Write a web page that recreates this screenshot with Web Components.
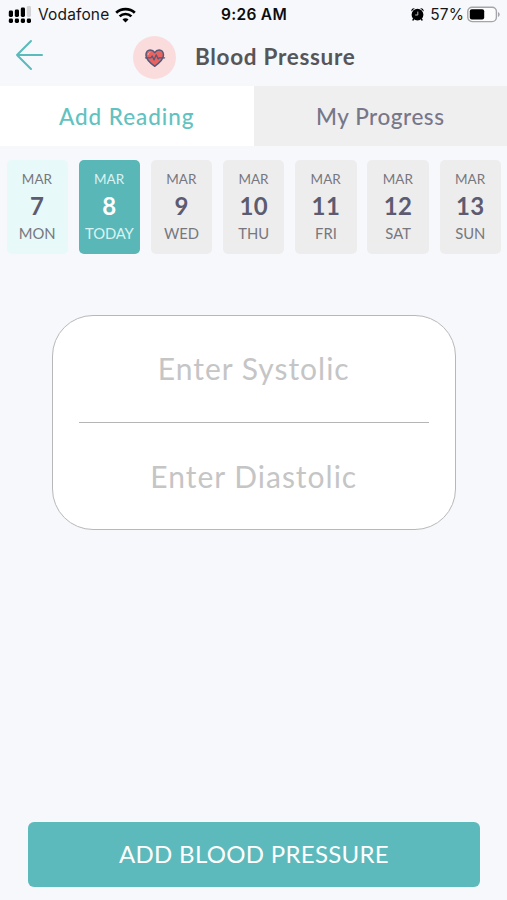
<!DOCTYPE html>
<html lang="en">
<head>
<meta charset="utf-8">
<title>Blood Pressure</title>
<style>
html,body{margin:0;height:100%;background:#f6f8fc;font-family:Lato,"Open Sans",sans-serif;overflow:hidden}
</style>
</head>
<body>
<bp-screen></bp-screen>
<script>
const define = (name, html) => customElements.define(name, class extends HTMLElement {
  constructor() {
    super();
    this.attachShadow({ mode: 'open' }).innerHTML = html;
  }
});

define('status-bar', `
<style>
:host{display:grid;grid-template-columns:1fr auto 1fr;align-items:center;height:29px;padding:0 7px 0 8px;box-sizing:border-box;font-family:Inter,sans-serif;font-size:15.5px;line-height:28px;color:#161618;white-space:nowrap}
.l,.r{display:flex;align-items:center}
.r{justify-content:flex-end}
.car{margin:0 6px 0 6px;letter-spacing:.15px}
.t{font-weight:600;color:#0c0c0e;letter-spacing:.3px}
.p{margin:0 3px 0 6px;letter-spacing:.1px}
svg{display:block;flex:none}
.r svg{margin-top:-1px}
</style>
<div class="l">
<svg width="24" height="18" viewBox="0 0 24 18">
<g fill="#000"><rect x=".8" y="4.500" width="4.200" height="6.500" rx="1.4"/><rect x="6.8" y="3.500" width="4.200" height="7.500" rx="1.4"/><rect x="12.8" y="1.500" width="4.200" height="9.500" rx="1.4"/><rect x=".8" y="12.500" width="4.200" height="4.500" rx="1.4"/><rect x="6.8" y="12.500" width="4.200" height="4.500" rx="1.4"/><rect x="12.8" y="12.500" width="4.200" height="4.500" rx="1.4"/><rect x="18.8" y="12.500" width="4.200" height="4.500" rx="1.4"/></g><rect x="18.8" y="0" width="4.200" height="11" rx="1.4" fill="#d3d3d6"/></svg>
<span class="car">Vodafone</span>
<svg width="21" height="16" viewBox="0 0 21 16" fill="none" stroke="#000" stroke-width="2.7"><path d="M1.2 5.8C6.3.9 14.7.9 19.8 5.8"/><path d="M4.6 9.4c3.3-3.2 8.5-3.2 11.8 0"/><path d="M10.5 15.5l-3-3.1c1.6-1.6 4.4-1.6 6 0z" fill="#000" stroke="none"/></svg>
</div>
<span class="t">9:26 AM</span>
<div class="r">
<svg width="13" height="15" viewBox="0 0 13 15"><circle cx="6.500" cy="7.700" r="5.900"/><path d="M.3 4.600C0 2 1.800.9 3.800 1.200zM12.700 4.600c.3-2.600-1.500-3.700-3.500-3.400z"/><path d="M2.800 11.500L1.800 13.500M10.200 11.500l1 2" stroke="#000" stroke-width="1.600"/><path d="M6.800 4.600v3.400H4.200" fill="none" stroke="#b9babe" stroke-width="1"/></svg>
<span class="p">57%</span>
<svg width="33" height="17" viewBox="0 0 33 17"><rect x=".8" y="1.2" width="28.6" height="14.4" rx="4.3" fill="#fcfcfd" stroke="#a5a5a8" stroke-width="1.4"/><rect x="2.8" y="3.300" width="14.4" height="10.2" rx="2" fill="#000"/><path d="M31 6v5q1.700-.8 1.700-2.500T31 6" fill="#a5a5a8"/></svg>
</div>`);

define('heart-badge', `
<style>:host{display:flex;align-items:center;justify-content:center;width:43px;height:43px;border-radius:50%;background:#fbdcdc}svg{display:block}</style>
<svg width="22" height="20" viewBox="0 0 23 21" fill="none" stroke="#565878" stroke-linejoin="round" stroke-linecap="round"><path d="M11.2 19.2C8 16.9 2 12.7 2 7.4 2 4.2 4 2 6.5 2c2 0 3.600 1 4.700 2.800C12.300 3 13.900 2 15.900 2c2.500 0 4.500 2.200 4.500 5.400 0 5.300-6 9.500-9.200 11.800z" fill="#ea6360" stroke-width="1.600"/><path d="M1.500 10.300h5.600l1.500-2 1.900 4.300 2.300-5.400 2 4.300 1.200-1.200h5.600" stroke-width="1.300"/><path d="M4.300 7c.1-1.400.9-2.400 2-2.600" stroke="#f8a5a2" stroke-width="1"/></svg>`);

define('page-header', `
<style>
:host{display:flex;align-items:center;height:57px;padding-left:14px;box-sizing:border-box}
heart-badge{margin:0 19px 0 90px}
.title{font-size:22.500px;font-weight:700;line-height:54px;margin-bottom:2px;color:#565659;letter-spacing:.7px;white-space:nowrap}
svg{display:block;margin-top:-5px}
</style>
<svg width="29" height="32" viewBox="0 0 29 32" fill="none" stroke="#5bbaba" stroke-width="2" stroke-linecap="round" stroke-linejoin="round"><path d="M17 2L3 16 17 30M3 16h25"/></svg>
<heart-badge></heart-badge>
<span class="title"><slot></slot></span>`);

define('tab-item', `
<style>
:host{display:block;flex:1;text-align:center;font-size:22.500px;line-height:62px;height:60px;background:#efefef;color:#77778a;letter-spacing:.55px;font-weight:500;white-space:nowrap}
:host([active]){background:#fff;color:#62c2c0;letter-spacing:.95px}
</style><slot></slot>`);

define('tab-bar', `<style>:host{display:flex;height:60px}</style><slot></slot>`);

define('day-card', `
<style>
:host{display:flex;flex-direction:column;align-items:center;height:94px;padding-top:9px;box-sizing:border-box;border-radius:5px;background:#ededee;color:#77777e;white-space:nowrap}
.m{font-size:13.500px;line-height:20px;margin-right:.5px}
.n{font-size:24px;line-height:34px;font-weight:700;color:#5d5b70;letter-spacing:.4px}
.d{font-size:14.800px;line-height:20px}
:host([past]){background:#e7f9f8}
:host([today]){background:#59b7b8;color:#d9f3f2}
:host([today]) .n{color:#fff}
:host([today]) .d{letter-spacing:-.15px}
</style>
<span class="m"><slot name="month"></slot></span><span class="n"><slot></slot></span><span class="d"><slot name="day"></slot></span>`);

define('day-strip', `<style>:host{display:grid;grid-template-columns:repeat(7,1fr);gap:10.800px;padding:14px 6px 0 6.500px}</style><slot></slot>`);

define('reading-field', `
<style>:host{display:flex;align-items:center;justify-content:center;height:106px;padding-bottom:3px;box-sizing:border-box;font-size:30px;line-height:36px;color:#c5c5c6;letter-spacing:1px;white-space:nowrap}</style><slot></slot>`);

define('reading-form', `
<style>
:host{display:block;box-sizing:border-box;height:215px;margin:61px 51px 0 51.500px;padding:0 26px;border:1.500px solid #b8b8b9;border-radius:41px;background:#fff}
hr{margin:0 0 1px;border:0;height:1px;background:#b5b5b6}
</style>
<slot name="first"></slot><hr><slot name="second"></slot>`);

define('primary-button', `
<style>:host{display:block;margin:auto 27px 13px 28px;height:65px;border-radius:6px;background:#5dbabc;color:#fff;text-align:center;font-size:24px;line-height:63px;letter-spacing:.3px;white-space:nowrap}</style><slot></slot>`);

const days = [['7','MON','past'],['8','TODAY','today'],['9','WED',''],['10','THU',''],['11','FRI',''],['12','SAT',''],['13','SUN','']];

define('bp-screen', `
<style>:host{display:flex;flex-direction:column;width:507px;height:900px;background:#f6f8fc}</style>
<status-bar></status-bar>
<page-header>Blood Pressure</page-header>
<tab-bar><tab-item active>Add Reading</tab-item><tab-item>My Progress</tab-item></tab-bar>
<day-strip>${days.map(([n,d,s]) => `<day-card ${s}><span slot="month">MAR</span>${n}<span slot="day">${d}</span></day-card>`).join('')}</day-strip>
<reading-form><reading-field slot="first">Enter Systolic</reading-field><reading-field slot="second">Enter Diastolic</reading-field></reading-form>
<primary-button>ADD BLOOD PRESSURE</primary-button>`);
</script>
</body>
</html>
